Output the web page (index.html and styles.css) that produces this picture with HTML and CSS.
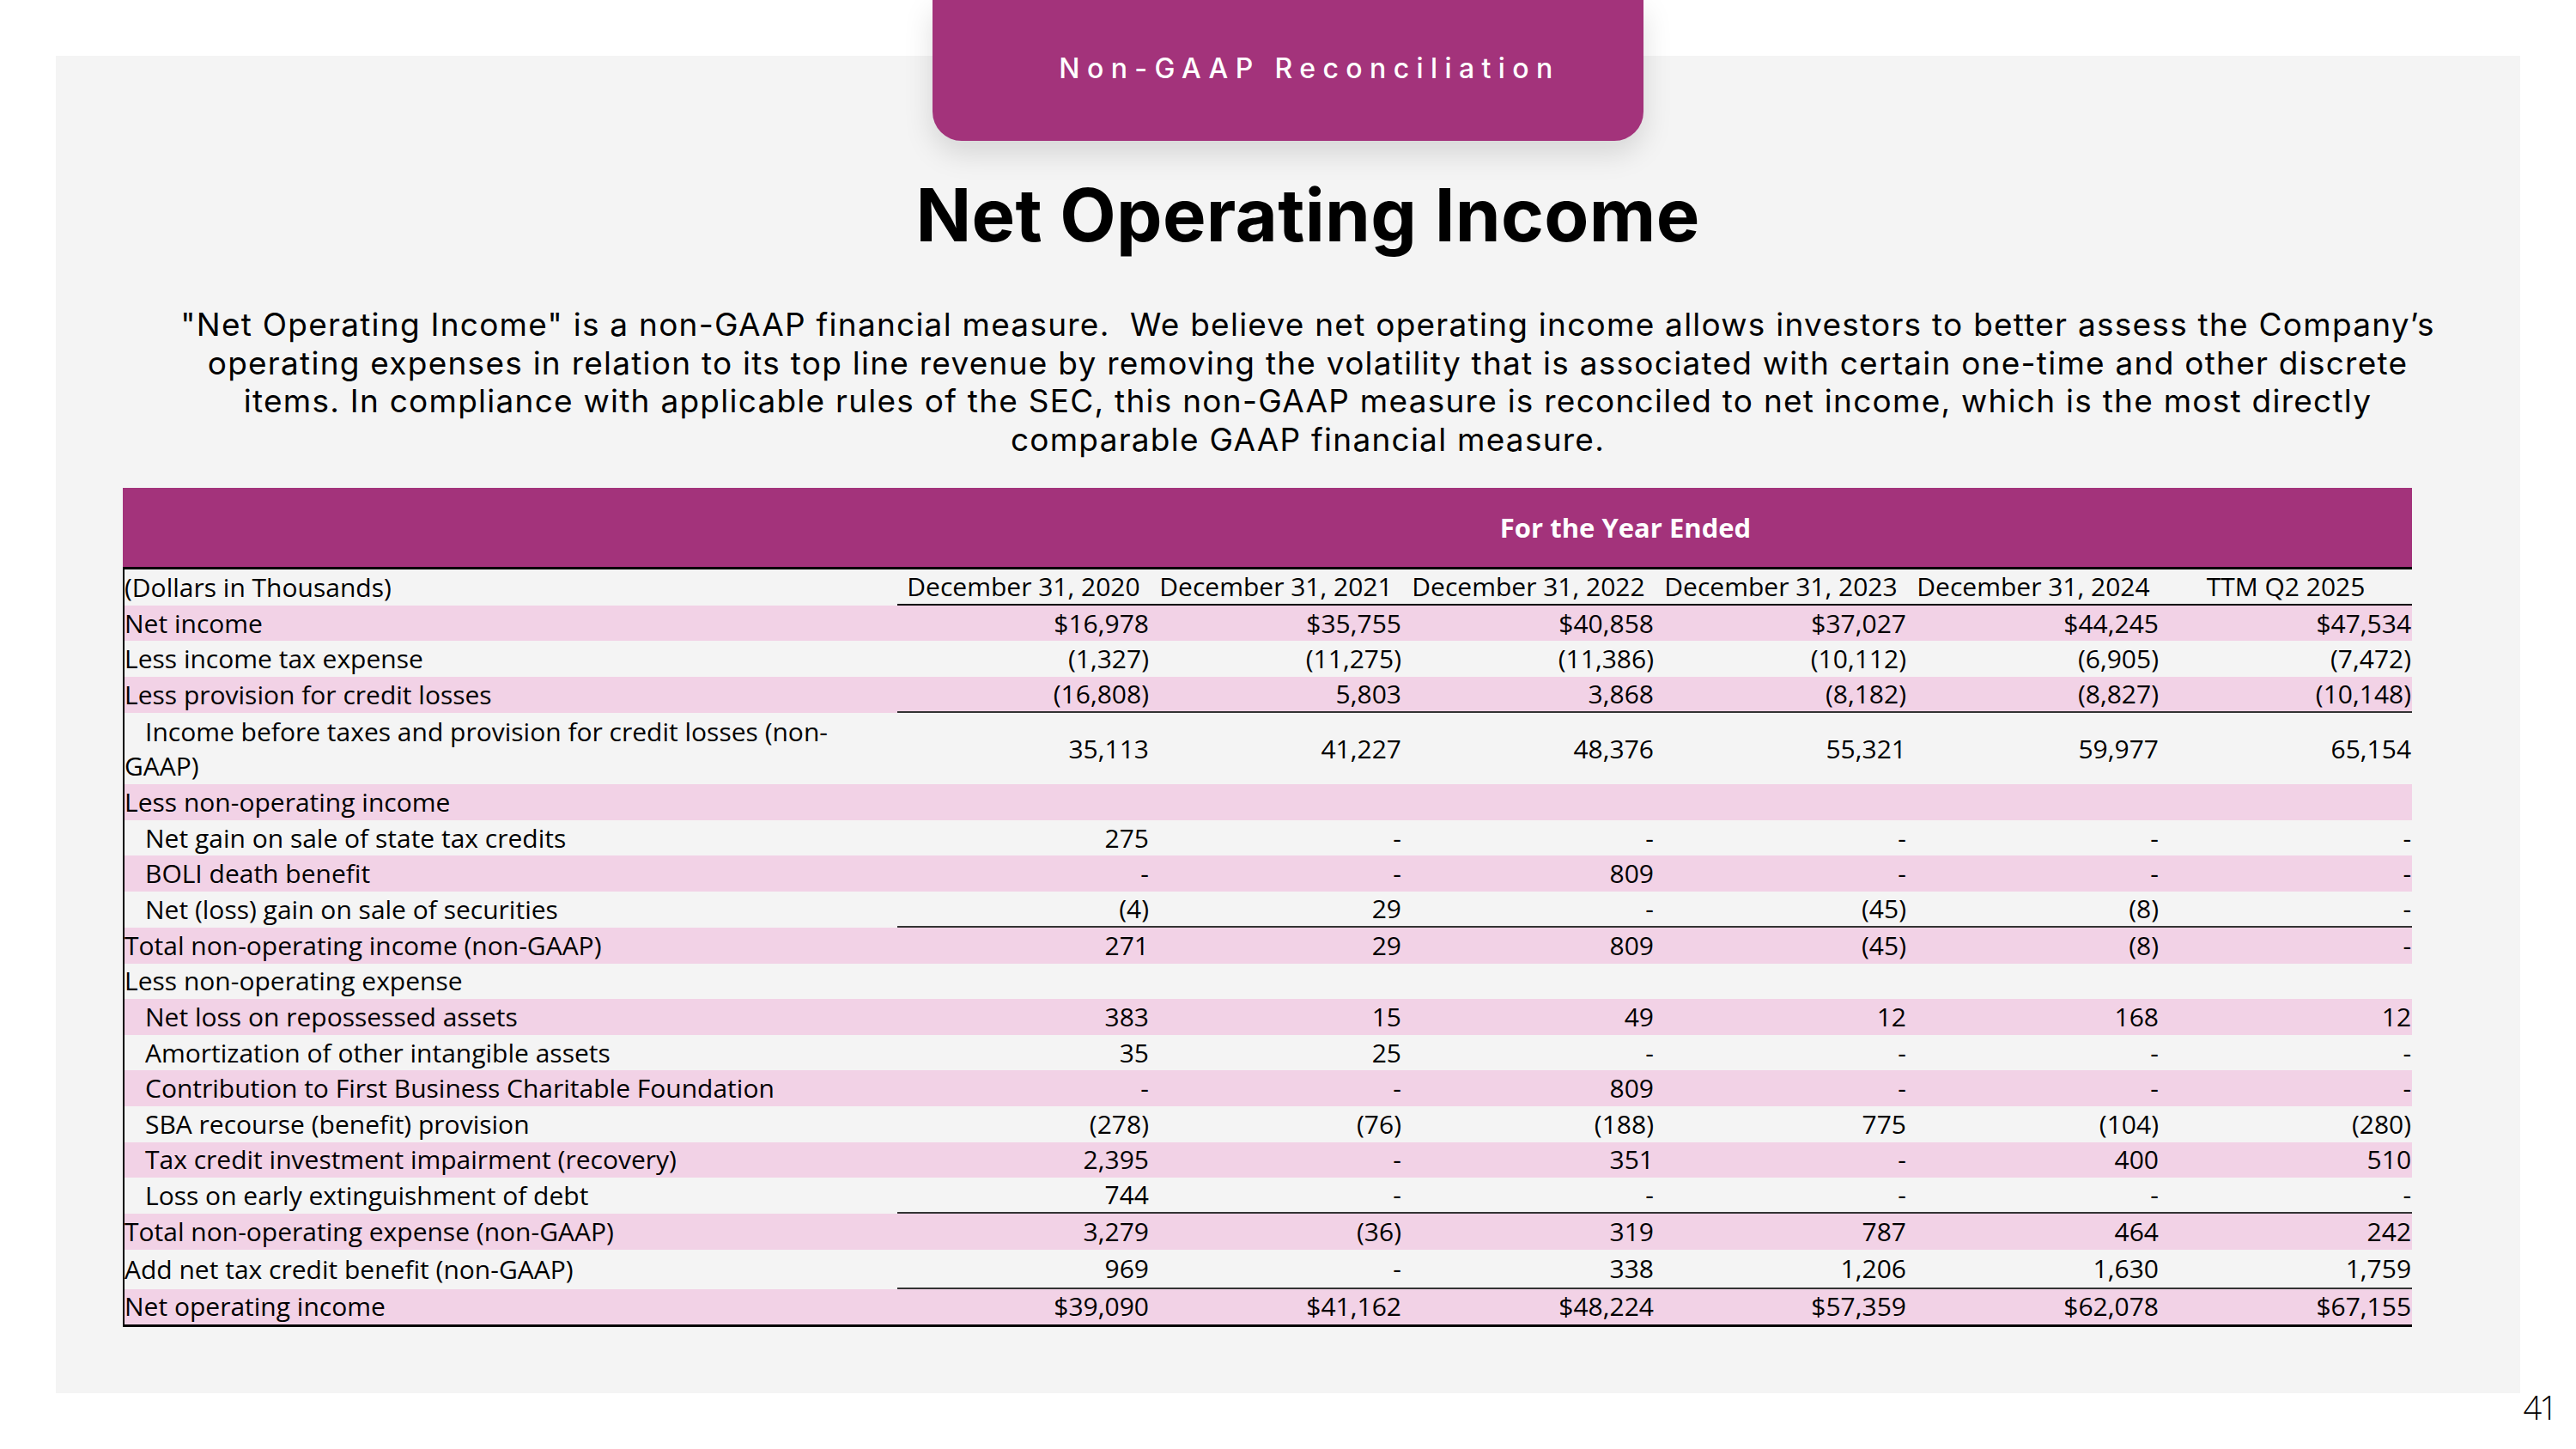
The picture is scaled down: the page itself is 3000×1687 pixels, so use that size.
FILE: index.html
```html
<!DOCTYPE html>
<html lang="en">
<head>
<meta charset="utf-8">
<title>Non-GAAP Reconciliation – Net Operating Income</title>
<link rel="stylesheet" href="styles.css">
</head>
<body>
<main class="slide">
  <section class="panel">
    <div class="tab">Non-GAAP Reconciliation</div>
    <h1 class="title">Net Operating Income</h1>
    <p class="intro">"Net Operating Income" is a non-GAAP financial measure.&nbsp; We believe net operating income allows investors to better assess the Company’s<br>operating expenses in relation to its top line revenue by removing the volatility that is associated with certain one-time and other discrete<br>items. In compliance with applicable rules of the SEC, this non-GAAP measure is reconciled to net income, which is the most directly<br>comparable GAAP financial measure.</p>
    <table class="recon">
      <colgroup>
        <col class="c-label"><col class="c-num"><col class="c-num"><col class="c-num"><col class="c-num"><col class="c-num"><col class="c-num">
      </colgroup>
      <thead>
        <tr class="band"><th class="band-blank"></th><th class="band-title" colspan="6">For the Year Ended</th></tr>
        <tr class="dates"><th class="lbl">(Dollars in Thousands)</th><th class="date">December 31, 2020</th><th class="date">December 31, 2021</th><th class="date">December 31, 2022</th><th class="date">December 31, 2023</th><th class="date">December 31, 2024</th><th class="date">TTM Q2 2025</th></tr>
      </thead>
      <tbody>
        <tr class="pink"><td class="lbl">Net income</td><td class="num">$16,978</td><td class="num">$35,755</td><td class="num">$40,858</td><td class="num">$37,027</td><td class="num">$44,245</td><td class="num">$47,534</td></tr>
        <tr><td class="lbl">Less income tax expense</td><td class="num">(1,327)</td><td class="num">(11,275)</td><td class="num">(11,386)</td><td class="num">(10,112)</td><td class="num">(6,905)</td><td class="num">(7,472)</td></tr>
        <tr class="pink rule"><td class="lbl">Less provision for credit losses</td><td class="num">(16,808)</td><td class="num">5,803</td><td class="num">3,868</td><td class="num">(8,182)</td><td class="num">(8,827)</td><td class="num">(10,148)</td></tr>
        <tr class="double"><td class="lbl ind">Income before taxes and provision for credit losses (non-<br>GAAP)</td><td class="num">35,113</td><td class="num">41,227</td><td class="num">48,376</td><td class="num">55,321</td><td class="num">59,977</td><td class="num">65,154</td></tr>
        <tr class="pink"><td class="lbl">Less non-operating income</td><td class="num"></td><td class="num"></td><td class="num"></td><td class="num"></td><td class="num"></td><td class="num"></td></tr>
        <tr><td class="lbl ind">Net gain on sale of state tax credits</td><td class="num">275</td><td class="num">-</td><td class="num">-</td><td class="num">-</td><td class="num">-</td><td class="num">-</td></tr>
        <tr class="pink"><td class="lbl ind">BOLI death benefit</td><td class="num">-</td><td class="num">-</td><td class="num">809</td><td class="num">-</td><td class="num">-</td><td class="num">-</td></tr>
        <tr class="rule"><td class="lbl ind">Net (loss) gain on sale of securities</td><td class="num">(4)</td><td class="num">29</td><td class="num">-</td><td class="num">(45)</td><td class="num">(8)</td><td class="num">-</td></tr>
        <tr class="pink"><td class="lbl">Total non-operating income (non-GAAP)</td><td class="num">271</td><td class="num">29</td><td class="num">809</td><td class="num">(45)</td><td class="num">(8)</td><td class="num">-</td></tr>
        <tr><td class="lbl">Less non-operating expense</td><td class="num"></td><td class="num"></td><td class="num"></td><td class="num"></td><td class="num"></td><td class="num"></td></tr>
        <tr class="pink"><td class="lbl ind">Net loss on repossessed assets</td><td class="num">383</td><td class="num">15</td><td class="num">49</td><td class="num">12</td><td class="num">168</td><td class="num">12</td></tr>
        <tr><td class="lbl ind">Amortization of other intangible assets</td><td class="num">35</td><td class="num">25</td><td class="num">-</td><td class="num">-</td><td class="num">-</td><td class="num">-</td></tr>
        <tr class="pink"><td class="lbl ind">Contribution to First Business Charitable Foundation</td><td class="num">-</td><td class="num">-</td><td class="num">809</td><td class="num">-</td><td class="num">-</td><td class="num">-</td></tr>
        <tr><td class="lbl ind">SBA recourse (benefit) provision</td><td class="num">(278)</td><td class="num">(76)</td><td class="num">(188)</td><td class="num">775</td><td class="num">(104)</td><td class="num">(280)</td></tr>
        <tr class="pink"><td class="lbl ind">Tax credit investment impairment (recovery)</td><td class="num">2,395</td><td class="num">-</td><td class="num">351</td><td class="num">-</td><td class="num">400</td><td class="num">510</td></tr>
        <tr class="rule"><td class="lbl ind">Loss on early extinguishment of debt</td><td class="num">744</td><td class="num">-</td><td class="num">-</td><td class="num">-</td><td class="num">-</td><td class="num">-</td></tr>
        <tr class="pink"><td class="lbl">Total non-operating expense (non-GAAP)</td><td class="num">3,279</td><td class="num">(36)</td><td class="num">319</td><td class="num">787</td><td class="num">464</td><td class="num">242</td></tr>
        <tr class="tall rule"><td class="lbl">Add net tax credit benefit (non-GAAP)</td><td class="num">969</td><td class="num">-</td><td class="num">338</td><td class="num">1,206</td><td class="num">1,630</td><td class="num">1,759</td></tr>
        <tr class="pink last"><td class="lbl">Net operating income</td><td class="num">$39,090</td><td class="num">$41,162</td><td class="num">$48,224</td><td class="num">$57,359</td><td class="num">$62,078</td><td class="num">$67,155</td></tr>
      </tbody>
    </table>
  </section>
  <footer class="page-num">41</footer>
</main>
</body>
</html>
```
FILE: styles.css
```css
html, body {
  margin: 0;
  background: #ffffff;
}

body {
  width: 3000px;
  height: 1687px;
  overflow: hidden;
}

.slide {
  padding-top: 65px;
}

.panel {
  margin: 0 65px;
  height: 1557px;
  background: #f4f4f4;
  display: flex;
  flex-direction: column;
  align-items: center;
}

.tab {
  margin-top: -65px;
  width: 828px;
  height: 164px;
  box-sizing: border-box;
  padding: 0 0 6px 50px;
  background: #a3337b;
  border-radius: 0 0 34px 34px;
  box-shadow: 0 14px 34px rgba(0, 0, 0, 0.13);
  display: flex;
  align-items: center;
  justify-content: center;
  color: #ffffff;
  font-family: "Inter", "Noto Sans", sans-serif;
  font-weight: 500;
  font-size: 32px;
  letter-spacing: 8.4px;
}

.title {
  margin: 37px 0 0;
  padding-left: 46px;
  font-family: "Inter", "Noto Sans", sans-serif;
  font-weight: 700;
  font-size: 85px;
  line-height: 100px;
  letter-spacing: 0.3px;
  color: #000000;
}

.intro {
  margin: 55px 0 0;
  padding-left: 46px;
  font-family: "Inter", "Noto Sans", sans-serif;
  font-weight: 400;
  font-size: 37px;
  line-height: 44.7px;
  letter-spacing: 1.25px;
  text-align: center;
  white-space: nowrap;
  color: #000000;
}

.recon {
  align-self: flex-start;
  margin: 33px 0 0 78px;
  width: 2666px;
  table-layout: fixed;
  border-collapse: separate;
  border-spacing: 0;
  font-family: "Open Sans", "Liberation Sans", sans-serif;
  font-size: 30px;
  line-height: 40px;
  color: #000000;
}

.c-label {
  width: 902px;
}

.c-num {
  width: 294px;
}

.recon th,
.recon td {
  padding: 0;
  vertical-align: middle;
  white-space: nowrap;
  font-weight: 400;
}

.recon tr {
  height: 41.6px;
}

.recon .band {
  height: 92px;
}

.band th {
  background: #a3337b;
}

.recon .band-title {
  color: #ffffff;
  font-weight: 700;
  font-size: 31px;
  text-align: center;
  padding-right: 68px;
}

.recon .dates {
  height: 45px;
}

.dates th {
  border-top: 3px solid #000000;
}

.dates .date {
  text-align: center;
  border-bottom: 2px solid #000000;
}

.lbl {
  text-align: left;
  border-left: 2px solid #000000;
}

.ind {
  text-indent: 24px;
}

.recon .num {
  text-align: right;
  padding-right: 1px;
}

.pink td {
  background: #f2d2e6;
}

.rule .num {
  border-bottom: 2px solid #333333;
}

.recon .double {
  height: 83.2px;
}

.recon .tall {
  height: 46px;
}

.recon .last {
  height: 44px;
}

.last td {
  border-bottom: 3px solid #000000;
}

.page-num {
  text-align: right;
  padding-right: 24px;
  font-family: "Open Sans", "Liberation Sans", sans-serif;
  font-weight: 300;
  font-size: 38px;
  line-height: 32px;
  letter-spacing: -3px;
  color: #000000;
}
```
